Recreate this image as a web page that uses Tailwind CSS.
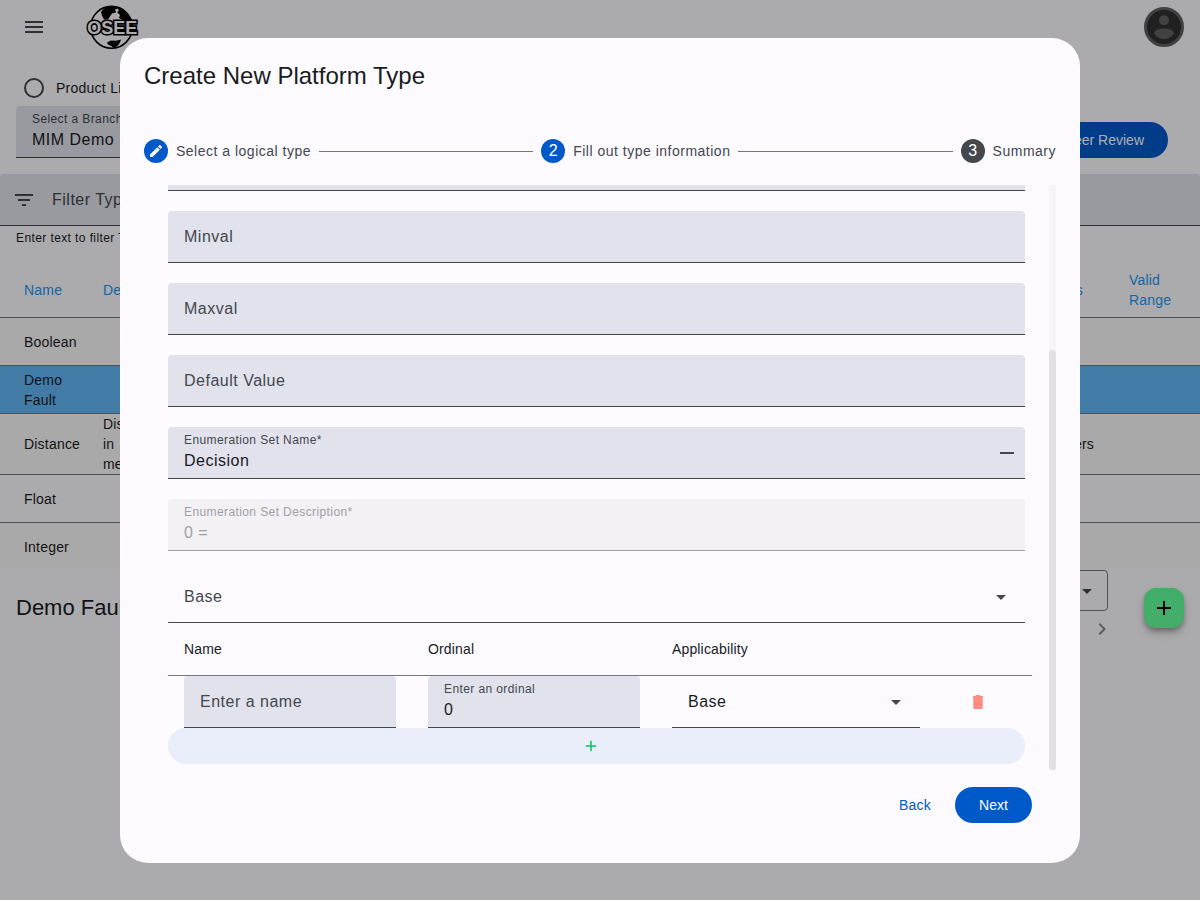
<!DOCTYPE html>
<html lang="en">
<head>
<meta charset="utf-8">
<title>Platform Types</title>
<script src="https://cdn.jsdelivr.net/npm/@tailwindcss/browser@4"></script>
</head>
<body class="bg-[#fdfbff] font-['Liberation_Sans',Arial,sans-serif] text-[#1a1b1f]">
<div class="relative h-[900px] w-[1200px] overflow-hidden">

  <!-- page -->
  <div class="flex h-full w-full flex-col">
    <header class="flex h-[54px] shrink-0 items-center pl-[22px] pr-4">
      <svg class="size-6 fill-[#44474e]" viewBox="0 0 24 24"><path d="M3 18h18v-2H3v2zm0-5h18v-2H3v2zm0-7v2h18V6H3z"/></svg>
      <svg class="ml-[36px] h-[50px] w-[60px]" viewBox="82 2 60 50">
        <circle cx="111.500" cy="27.300" r="20.900" fill="none" stroke="#000" stroke-width="1.600"/>
        <path d="M101 12l3-3.500 5-2.500 6 .5 3 2-3 1 1 3-4 1-2 3-2 3h-4l-2-4z" fill="#000"/>
        <path d="M117 7l5 2 5 5 4 6h-8l-4-2 1-3-3-3 2-1z" fill="#000"/>
        <path d="M107 42.500l4-2 5 .3 5-1.300-1 3-2 3-4 2.500-3-2-3-1.500z" fill="#000"/>
        <text x="87.300" y="34" font-family="Liberation Sans" font-weight="700" font-size="19" textLength="50" lengthAdjust="spacingAndGlyphs" fill="#fdfbff" stroke="#000" stroke-width="3.200" stroke-linejoin="miter" paint-order="stroke">OSEE</text>
      </svg>
      <div class="ml-auto flex size-10 items-center justify-center rounded-full border-[3px] border-[#616161] bg-[#303030]">
        <svg class="h-[26px] w-[22px]" viewBox="0 0 22 26"><g fill="#616161"><circle cx="11" cy="6.200" r="5"/><path d="M1 19.500c0-3.500 5-5 10-5s10 1.500 10 5c-2 3.500-6 5.500-10 5.500S3 23 1 19.500z"/></g></svg>
      </div>
    </header>

    <section class="flex h-[120px] shrink-0 justify-between px-4">
      <div class="w-[300px]">
        <div class="flex h-[52px] items-center gap-3 pl-2 pt-4 text-sm tracking-[0.25px]"><span class="size-5 rounded-full border-2 border-[#44474e]"></span>Product Line</div>
        <div class="h-[52px] rounded-t border-b border-[#44474e] bg-[#e0e4eb] px-4 pt-[5px]">
          <div class="text-xs leading-4 tracking-[0.4px] text-[#44474e]">Select a Branch</div>
          <div class="pt-px text-base leading-6 tracking-[0.5px]">MIM Demo</div>
        </div>
      </div>
      <div class="mr-4 mt-[68px] flex h-9 w-[150px] items-center justify-end rounded-full bg-[#0059c8] pr-6 text-sm text-white">Peer Review</div>
    </section>

    <section class="shrink-0">
      <div class="flex h-[52px] items-center gap-4 rounded-t border-b border-[#44474e] bg-[#e0e4eb] pl-3 text-base tracking-[0.5px] text-[#44474e]">
        <svg class="size-6 fill-[#44474e]" viewBox="0 0 24 24"><path d="M10 18h4v-2h-4v2zM3 6v2h18V6H3zm3 7h12v-2H6v2z"/></svg>Filter Types
      </div>
      <div class="h-9 pl-4 pt-1 text-xs leading-4 tracking-[0.4px]">Enter text to filter Types</div>
    </section>

    <section class="shrink-0 text-sm leading-5 tracking-[0.2px]">
      <div class="flex h-14 items-center border-b border-[#74777f] text-[#2196f3]"><div class="w-[103px] pl-6">Name</div><div class="w-[900px]">Description</div><div class="w-20 text-right">Units</div><div class="ml-[46px] w-14">Valid Range</div></div>
      <div class="flex h-12 items-center border-b border-[#74777f] bg-[#fafafa] pl-6">Boolean</div>
      <div class="flex h-12 items-center border-b border-[#74777f] bg-[#64b5f6] pl-6"><span class="w-14">Demo Fault</span></div>
      <div class="flex h-[61px] items-center border-b border-[#74777f] bg-[#fafafa]"><div class="w-[103px] pl-6">Distance</div><div class="w-[900px]">Distance<br>in<br>meters</div><div class="w-[91px] text-right">meters</div></div>
      <div class="flex h-12 items-center border-b border-[#74777f] pl-6">Float</div>
      <div class="flex h-12 items-center bg-[#fafafa] pl-6">Integer</div>
    </section>

    <section class="flex justify-between pl-4 pr-4">
      <h2 class="mt-[21px] text-[22px] leading-8">Demo Fault</h2>
      <div class="flex">
        <div class="flex w-28 flex-col items-end">
          <div class="mt-[-1px] flex h-[41px] w-28 items-center justify-end rounded border border-[#74777f] pr-[15px]"><svg class="mt-px h-[5px] w-[10px] fill-[#44474e]" viewBox="0 0 10 5"><path d="M0 0h10L5 5z"/></svg></div>
          <svg class="-mr-[6px] mt-[6px] size-6 fill-[#1a1b1f]/50" viewBox="0 0 24 24"><path d="M10 6L8.590 7.410 13.170 12l-4.580 4.590L10 18l6-6z"/></svg>
        </div>
        <div class="ml-9 mt-[17px] flex size-10 items-center justify-center rounded-xl bg-[#64ff9c] shadow-[0_3px_5px_-1px_rgba(0,0,0,0.3),0_5px_10px_rgba(0,0,0,0.2)]"><svg class="size-6 fill-black" viewBox="0 0 24 24"><path d="M19 13h-6v6h-2v-6H5v-2h6V5h2v6h6v2z"/></svg></div>
      </div>
    </section>
  </div>

  <!-- dialog over a dimmed backdrop -->
  <div class="absolute inset-0 flex justify-center bg-black/32 pt-[38px]">
    <div class="flex h-[825px] w-[960px] flex-col rounded-[28px] bg-[#fdfbff]">
      <h1 class="h-[77px] shrink-0 pl-6 pt-[22px] text-2xl leading-8">Create New Platform Type</h1>
      <div class="flex h-[72px] shrink-0 items-center pl-6 pr-6 text-sm tracking-[0.5px] text-[#44474e]">
        <span class="mr-2 flex size-6 items-center justify-center rounded-full bg-[#0059c8]"><svg class="size-4 fill-white" viewBox="0 0 24 24"><path d="M3 17.250V21h3.750L17.810 9.940l-3.750-3.750L3 17.250zM20.710 7.040c.39-.39.39-1.020 0-1.410l-2.340-2.340c-.39-.39-1.020-.39-1.410 0l-1.830 1.830 3.750 3.750 1.830-1.830z"/></svg></span>
        <span>Select a logical type</span>
        <span class="mx-2 h-px flex-1 bg-[#74777f]"></span>
        <span class="mr-2 flex size-6 items-center justify-center rounded-full bg-[#0059c8] text-base tracking-normal text-white">2</span>
        <span>Fill out type information</span>
        <span class="mx-2 h-px flex-1 bg-[#74777f]"></span>
        <span class="mr-2 flex size-6 items-center justify-center rounded-full bg-[#44474e] text-base tracking-normal text-white">3</span>
        <span>Summary</span>
      </div>

      <div class="mt-[-2px] flex h-[585px] shrink-0 justify-between pl-12 pr-6">
        <div class="w-[864px] shrink-0 text-base tracking-[0.5px] text-[#44474e]">
          <div class="mb-5 h-[6px] w-[857px] border-b border-[#44474e] bg-[#e1e2ec]"></div>
          <div class="mb-5 flex h-[52px] w-[857px] items-center rounded-t border-b border-[#44474e] bg-[#e1e2ec] px-4">Minval</div>
          <div class="mb-5 flex h-[52px] w-[857px] items-center rounded-t border-b border-[#44474e] bg-[#e1e2ec] px-4">Maxval</div>
          <div class="mb-5 flex h-[52px] w-[857px] items-center rounded-t border-b border-[#44474e] bg-[#e1e2ec] px-4">Default Value</div>
          <div class="mb-5 flex h-[52px] w-[857px] items-center justify-between rounded-t border-b border-[#44474e] bg-[#e1e2ec] pl-4 pr-[11px]">
            <div><div class="text-xs leading-[15px] tracking-[0.4px]">Enumeration Set Name*</div><div class="pt-px leading-6 text-[#1a1b1f]">Decision</div></div>
            <span class="h-[2px] w-[14px] bg-[#44474e]"></span>
          </div>
          <div class="mb-5 h-[52px] w-[857px] rounded-t border-b border-[#a1a0a4] bg-[#f3f1f4] px-4 pt-[5px] text-[#a1a0a4]"><div class="text-xs leading-4 tracking-[0.4px]">Enumeration Set Description*</div><div class="pt-px leading-6">0 =</div></div>
          <div class="flex h-[52px] w-[857px] items-center justify-between border-b border-[#44474e] pl-4 pr-[19px]">Base<svg class="mt-0.5 h-[5px] w-[10px] fill-[#44474e]" viewBox="0 0 10 5"><path d="M0 0h10L5 5z"/></svg></div>
          <div class="grid h-[53px] grid-cols-[244px_244px_1fr] items-center border-b border-[#74777f] pl-4 text-sm tracking-[0.15px] text-[#1a1b1f]"><span>Name</span><span>Ordinal</span><span>Applicability</span></div>
          <div class="flex h-[52px] pl-4">
            <div class="flex w-[212px] items-center rounded-t border-b border-[#44474e] bg-[#e1e2ec] px-4">Enter a name</div>
            <div class="ml-8 w-[212px] rounded-t border-b border-[#44474e] bg-[#e1e2ec] px-4 pt-[5px]"><div class="text-xs leading-4 tracking-[0.4px]">Enter an ordinal</div><div class="pt-px leading-6 text-[#1a1b1f]">0</div></div>
            <div class="ml-8 flex w-[248px] items-center justify-between border-b border-[#44474e] pl-4 pr-[19px] text-[#1a1b1f]">Base<svg class="mt-0.5 h-[5px] w-[10px] fill-[#44474e]" viewBox="0 0 10 5"><path d="M0 0h10L5 5z"/></svg></div>
            <svg class="ml-[49px] mt-[17px] size-[18px] fill-[#ff8a80]" viewBox="0 0 18 18"><path d="M4 3h2.500l.5-1h4l.5 1H14v1.500H4zM4.300 4.500h9.400V14.800c0 .7-.5 1.200-1.200 1.200h-7c-.7 0-1.200-.5-1.200-1.200z"/></svg>
          </div>
          <div class="flex h-9 w-[857px] items-center justify-center rounded-full bg-[#e9eefa] pr-3"><svg class="size-[18px] fill-[#00c869]" viewBox="0 0 24 24"><path d="M19 13h-6v6h-2v-6H5v-2h6V5h2v6h6v2z"/></svg></div>
        </div>
        <div class="flex w-[7px] flex-col justify-end bg-[#f5f4f7]"><div class="h-[420px] rounded-full bg-[#e1e1e3]"></div></div>
      </div>

      <div class="mt-[17px] flex h-9 items-center justify-end pr-12 text-sm">
        <span class="mr-6 tracking-[0.25px] text-[#0059c8]">Back</span>
        <span class="flex h-9 w-[77px] items-center justify-center rounded-full bg-[#0059c8] text-white">Next</span>
      </div>
    </div>
  </div>
</div>
</body>
</html>
